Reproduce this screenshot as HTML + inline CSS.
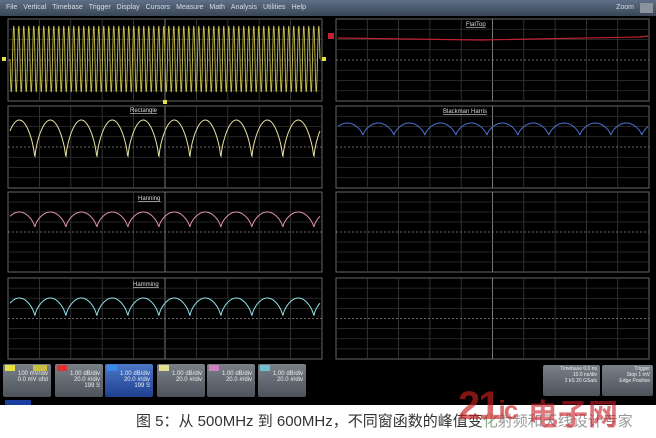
<!DOCTYPE html>
<html><head><meta charset="utf-8"><style>
body{margin:0;width:656px;height:438px;overflow:hidden;background:#000;font-family:"Liberation Sans","Noto Sans CJK SC",sans-serif}
#menu{position:absolute;left:0;top:0;width:656px;height:16px;background:linear-gradient(#5d6f86,#3a4656);color:#d8dde4;font-size:7px;line-height:16px}
#menu span{margin-left:6px}
.btn{position:absolute;top:364px;height:33px;width:48px;background:linear-gradient(#7a8088,#4e545c);border-radius:2px;color:#eee;font-size:6px;text-align:right;box-sizing:border-box;padding:1px 3px}
.tag{position:absolute;left:2px;top:1px;width:10px;height:6px}
#cap{position:absolute;left:0;top:405px;width:656px;height:33px;background:#fff;font-size:15px;color:#333;line-height:33px;text-indent:136px;white-space:nowrap}
</style></head><body>
<div id="menu"><span>File</span><span>Vertical</span><span>Timebase</span><span>Trigger</span><span>Display</span><span>Cursors</span><span>Measure</span><span>Math</span><span>Analysis</span><span>Utilities</span><span>Help</span><span style="position:absolute;right:22px">Zoom</span><span style="position:absolute;right:3px;top:3px;width:13px;height:10px;background:#8a929c;margin:0"></span></div>
<svg id="s" width="656" height="405" style="position:absolute;left:0;top:0"></svg>
<div class="btn" style="left:3px"><div class="tag" style="background:#e8e040"></div><div class="tag" style="left:30px;width:14px;background:#c8c040"></div><br>100 mV/div<br>0.0 mV ofst</div>
<div class="btn" style="left:55px"><div class="tag" style="background:#e03030"></div><br>1.00 dB/div<br>20.0 #/div<br>199 S</div>
<div class="btn" style="left:105px;background:linear-gradient(#4c78c8,#1f3f90)"><div class="tag" style="background:#3a8ae8"></div><br>1.00 dB/div<br>20.0 #/div<br>199 S</div>
<div class="btn" style="left:157px"><div class="tag" style="background:#e0e090"></div><br>1.00 dB/div<br>20.0 #/div</div>
<div class="btn" style="left:207px"><div class="tag" style="background:#d080c0"></div><br>1.00 dB/div<br>20.0 #/div</div>
<div class="btn" style="left:258px"><div class="tag" style="background:#70c0d0"></div><br>1.00 dB/div<br>20.0 #/div</div>
<div style="position:absolute;left:5px;top:400px;width:26px;height:5px;background:#1a3fa0"></div>
<div class="btn" style="left:543px;top:365px;width:57px;height:31px;font-size:5px">Timebase 0.0 ns<br>10.0 ns/div<br>2 kS 20 GSa/s</div>
<div class="btn" style="left:602px;top:365px;width:51px;height:31px;font-size:5px">Trigger<br>Stop 1 mV<br>Edge Positive</div>
<div id="cap">图 5：从 500MHz 到 600MHz，不同窗函数的峰值变<span style="color:#8a8">化</span><span style="color:#999">射频和天线设计专家</span></div>
<div style="position:absolute;left:458px;top:384px;font:bold 40px 'Liberation Sans',sans-serif;color:rgba(200,30,30,0.65);letter-spacing:-2px">21<span style="font-size:26px">ic</span></div>
<div style="position:absolute;left:528px;top:390px;font:bold 30px 'Noto Sans CJK SC',sans-serif;color:rgba(200,30,40,0.6)">电子网</div>
<script>
var s=document.getElementById('s'),h='';
function panel(x,y,w,hh){h+='<rect x="'+x+'" y="'+y+'" width="'+w+'" height="'+hh+'" fill="none" stroke="#666" stroke-width="1"/>';
for(var i=1;i<10;i++){var xx=x+w*i/10;h+='<line x1="'+xx+'" y1="'+y+'" x2="'+xx+'" y2="'+(y+hh)+'" stroke="'+(i==5?'#777':'#3c3c3c')+'" stroke-width="'+(i==5?1:0.8)+'"/>';}
for(var j=1;j<8;j++){var yy=y+hh*j/8;h+='<line x1="'+x+'" y1="'+yy+'" x2="'+(x+w)+'" y2="'+yy+'" stroke="'+(j==4?'#888':'#333')+'" stroke-width="0.7" '+(j==4?'stroke-dasharray="2,2"':'')+'/>';}}
var L=8,W=314,R=336,RW=313,rows=[[19,82],[106,82],[192,80],[278,81]];
rows.forEach(function(r){panel(L,r[0],W,r[1]);panel(R,r[0],RW,r[1]);});
function path(pts,c,sw){h+='<polyline points="'+pts+'" fill="none" stroke="'+c+'" stroke-width="'+sw+'"/>';}
var p='';for(var x=10;x<=320;x+=0.25){p+=x+','+(59+33*Math.sin((x-10)/310*62*2*Math.PI)).toFixed(1)+' ';}path(p,'#c8c050',0.9);
function humps(x0,w,top,bot,n,c){var p='';for(var x=x0;x<=x0+w;x+=0.5){var t=Math.abs(Math.sin(((x-x0)/w*n+0.2)*Math.PI));p+=x+','+(bot-(bot-top)*Math.pow(t,0.6)).toFixed(1)+' ';}path(p,c,1);}
humps(10,310,120,160,10,'#e8e0a0');humps(338,310,123,136,10,'#4a70d0');
humps(10,310,212,228,10,'#e090b0');humps(10,310,298,317,10,'#90e0e8');
path('338,38 480,40 640,37 648,36','#c02030',1.2);
function lab(x,y,t){h+='<text x="'+x+'" y="'+y+'" fill="#ddd" font-size="6" font-family="Liberation Sans" text-decoration="underline">'+t+'</text>';}
lab(130,112,'Rectangle');lab(466,26,'FlatTop');lab(443,113,'Blackman Harris');lab(138,200,'Hanning');lab(133,286,'Hamming');
h+='<rect x="328" y="33" width="6" height="6" fill="#c02030"/><rect x="322" y="57" width="4" height="4" fill="#e8e040"/><rect x="2" y="57" width="4" height="4" fill="#e8e040"/><rect x="163" y="100" width="4" height="4" fill="#e8e040"/>';
s.innerHTML=h;
</script>
</body></html>
